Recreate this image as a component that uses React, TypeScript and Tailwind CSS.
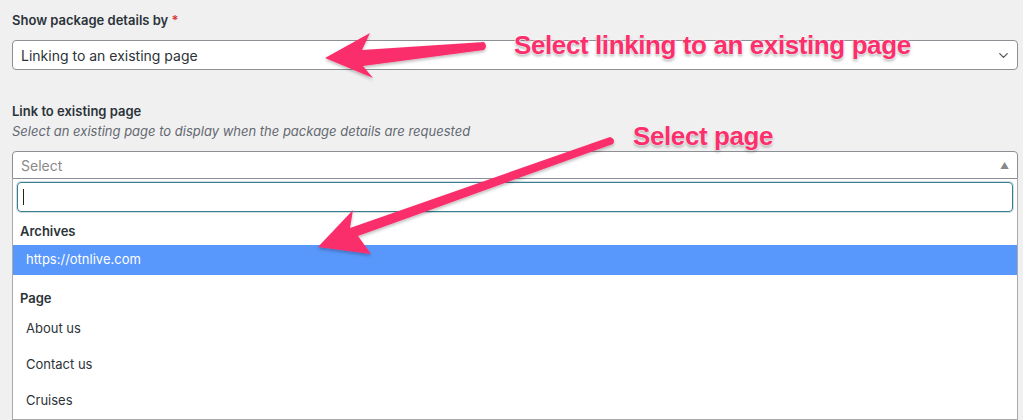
import { ChevronDown } from "lucide-react";

const pages = ["About us", "Contact us", "Cruises"];

// pink callout arrow, drawn over the form
function CalloutArrows() {
  return (
    <svg className="pointer-events-none absolute inset-0" width="1023" height="420" viewBox="0 0 1023 420">
      <defs>
        <filter id="shadow" x="-10%" y="-10%" width="120%" height="130%">
          <feDropShadow dx="0" dy="2" stdDeviation="1.5" floodColor="#000" floodOpacity="0.25" />
        </filter>
      </defs>
      <g fill="#fb2f6c" filter="url(#shadow)">
        <path d="M325 58 L370 33 L362 50 L484 42 Q488 46 484 50 L363 66 L373 78 Z" />
        <path d="M318 247 L353 210 L350 228 L610 137 Q616 139 613 144 L358 236 L371 254 Z" />
      </g>
    </svg>
  );
}

export default function App() {
  return (
    <div className="relative h-[420px] w-[1023px] overflow-hidden bg-[#f0f0f1] font-['Inter','Noto_Sans',sans-serif] text-[#2c3338]">
      <div className="px-3 pt-[12px]">
        {/* Show package details by */}
        <label className="block text-[13px] font-semibold leading-[16px]">
          Show package details by <span className="text-[#d63638]">*</span>
        </label>
        <div className="mt-[12px] flex h-[30px] w-[1006px] items-center justify-between rounded-[4px] border border-[#8c8f94] bg-white pl-2 pr-[6px] text-[14px]">
          <span>Linking to an existing page</span>
          <ChevronDown size={15} strokeWidth={2} className="text-[#50575e]" />
        </div>

        {/* Link to existing page */}
        <label className="mt-[33px] block text-[13px] font-semibold leading-[16px]">Link to existing page</label>
        <p className="mt-[4px] text-[13px] italic leading-[16px] text-[#646970]">
          Select an existing page to display when the package details are requested
        </p>

        <div className="mt-[12px] w-[1006px]">
          <div className="flex h-[28px] items-center justify-between rounded-t-[4px] border border-[#8c8f94] bg-white pl-2 pr-[8px] text-[14px] text-[#8a8a8a]">
            <span>Select</span>
            <span className="text-[9px] leading-none text-[#888]">▲</span>
          </div>
          <div className="border border-t-0 border-[#aaa] bg-white">
            <div className="px-[4px] pt-[3px]">
              <div className="flex h-[30px] items-center rounded-[4px] border border-[#3a7d8f] px-[5px] shadow-[0_0_0_1px_rgba(58,125,143,0.25)]">
                <span className="h-[16px] w-px bg-[#222]" />
              </div>
            </div>
            <div className="px-[7px] pb-[6px] pt-[11px] text-[13px] font-semibold leading-[16px]">Archives</div>
            <div className="flex h-[30px] items-center bg-[#5897fb] px-[13px] text-[13px] text-white">https://otnlive.com</div>
            <div className="px-[7px] pb-[5px] pt-[15px] text-[13px] font-semibold leading-[16px]">Page</div>
            {pages.map((p) => (
              <div key={p} className="flex h-[36px] items-center px-[13px] text-[13px]">
                {p}
              </div>
            ))}
          </div>
        </div>
      </div>

      <CalloutArrows />

      {/* callout labels */}
      <div className="absolute left-[514px] top-[26px] font-['Liberation_Sans',sans-serif] text-[26px] font-bold tracking-[-0.4px] text-[#fb2f6c] [text-shadow:0_0_2px_#fff,0_0_2px_#fff,0_2px_3px_rgba(0,0,0,0.35)]">
        Select linking to an existing page
      </div>
      <div className="absolute left-[633px] top-[117px] font-['Liberation_Sans',sans-serif] text-[26px] font-bold tracking-[-0.4px] text-[#fb2f6c] [text-shadow:0_0_2px_#fff,0_0_2px_#fff,0_2px_3px_rgba(0,0,0,0.35)]">
        Select page
      </div>
    </div>
  );
}
